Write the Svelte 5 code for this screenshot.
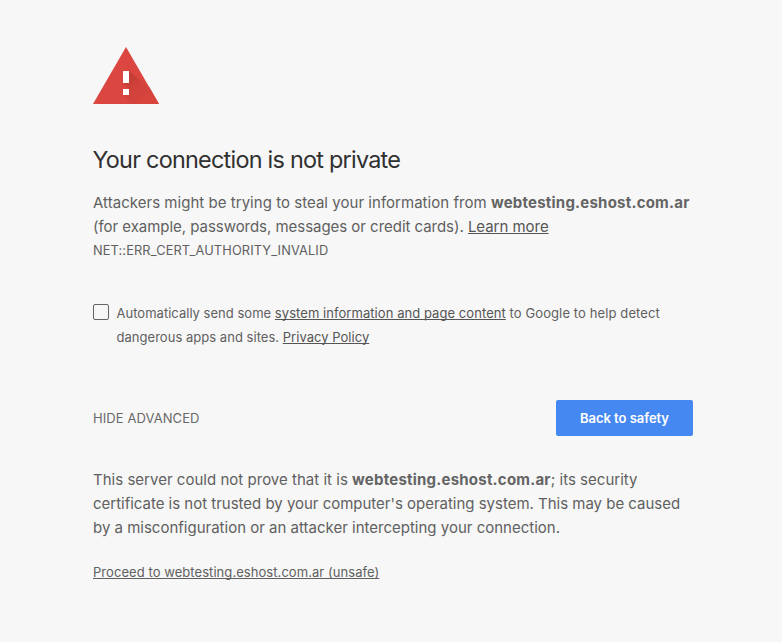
<script>
  const host = 'webtesting.eshost.com.ar';
  let checked = $state(false);
</script>

<main class="interstitial">
  <svg class="icon" width="66" height="57" viewBox="0 0 66 57" aria-hidden="true">
    <defs>
      <linearGradient id="shade" gradientUnits="userSpaceOnUse" x1="32" y1="28" x2="56" y2="52">
        <stop offset="0" stop-color="#bf3b34" />
        <stop offset="0.5" stop-color="#d0423a" />
        <stop offset="1" stop-color="#d8453d" />
      </linearGradient>
    </defs>
    <path d="M33 0L66 57H0Z" fill="#db4740" />
    <path d="M36 24L56.500 40.600L66 57H39L30 48L36 42L30 36Z" fill="url(#shade)" />
    <path d="M30 24h6v12h-6zM30 42h6v6h-6z" fill="#fff" />
  </svg>

  <h1>Your connection is not private</h1>

  <p class="body">
    <span class="line l1">Attackers might be trying to steal your information from <strong>{host}</strong></span>
    <span class="line l2">(for example, passwords, messages or credit cards). <a href="#learn">Learn more</a></span>
  </p>
  <div class="code">NET::ERR_CERT_AUTHORITY_INVALID</div>

  <label class="optin">
    <input type="checkbox" bind:checked />
    <span>
      <span class="line o1">Automatically send some <a href="#info">system information and page content</a> <span class="tail">to Google to help detect</span></span>
      <span class="line o2">dangerous apps and sites. <a href="#privacy">Privacy Policy</a></span>
    </span>
  </label>

  <div class="actions">
    <a class="details" href="#details">HIDE ADVANCED</a>
    <button>Back to safety</button>
  </div>

  <p class="body">
    <span class="line d1">This server could not prove that it is <strong>{host}</strong>; its security</span>
    <span class="line d2">certificate is not trusted by your computer's operating system. This may be caused</span>
    <span class="line d3">by a misconfiguration or an attacker intercepting your connection.</span>
  </p>
  <a class="proceed" href="#proceed">Proceed to {host} (unsafe)</a>
</main>

<style>
  :global(body) {
    background: #f7f7f7;
  }
  .interstitial {
    box-sizing: border-box;
    width: 600px;
    margin-left: 93px;
    padding-top: 47px;
    color: #606060;
    font-family: Inter, 'Liberation Sans', sans-serif;
    font-size: 15px;
    line-height: 24px;
  }
  .icon {
    display: block;
  }
  h1 {
    margin: 41px 0 16px;
    color: #303030;
    font-size: 23.4px;
    font-weight: 400;
    line-height: 30px;
    letter-spacing: -0.75px;
    text-indent: -0.5px;
    white-space: nowrap;
  }
  .body {
    margin: 0;
  }
  .line {
    display: block;
    white-space: nowrap;
  }
  strong {
    color: #646464;
    font-weight: 700;
    letter-spacing: 0.22px;
  }
  .l1 {
    letter-spacing: 0.035px;
  }
  .l2 {
    letter-spacing: -0.035px;
  }
  .o1 {
    letter-spacing: 0.02px;
  }
  .o1 a {
    letter-spacing: 0.06px;
  }
  .tail {
    letter-spacing: 0.11px;
  }
  .o2 {
    letter-spacing: 0.03px;
  }
  .d1 {
    letter-spacing: 0.02px;
  }
  .d2 {
    letter-spacing: -0.015px;
  }
  a {
    color: #555;
    text-decoration: underline;
    text-underline-offset: 1px;
    text-decoration-thickness: 1px;
    text-decoration-skip-ink: none;
  }
  .code {
    font-size: 12.8px;
    line-height: 24px;
    letter-spacing: 0.13px;
    white-space: nowrap;
  }
  .optin {
    display: flex;
    margin-top: 38px;
    font-size: 13px;
  }
  .optin input {
    appearance: none;
    flex: none;
    box-sizing: border-box;
    width: 16px;
    height: 16px;
    margin: 3px 7.5px 0 0;
    border: 1px solid #646464;
    border-radius: 2px;
    background: transparent;
  }
  .actions {
    display: flex;
    align-items: center;
    justify-content: space-between;
    margin: 51px 0 32px;
  }
  .details {
    color: #696969;
    font-size: 13px;
    letter-spacing: 0.08px;
    text-decoration: none;
  }
  button {
    width: 137px;
    height: 36px;
    padding: 0;
    border: 0;
    border-radius: 2px;
    background: #4688f1;
    color: #fff;
    font: 600 13px Inter, 'Liberation Sans', sans-serif;
    letter-spacing: -0.04px;
  }
  .proceed {
    display: inline-block;
    margin-top: 20px;
    color: #606060;
    font-size: 13px;
    letter-spacing: 0.06px;
    white-space: nowrap;
  }
</style>
